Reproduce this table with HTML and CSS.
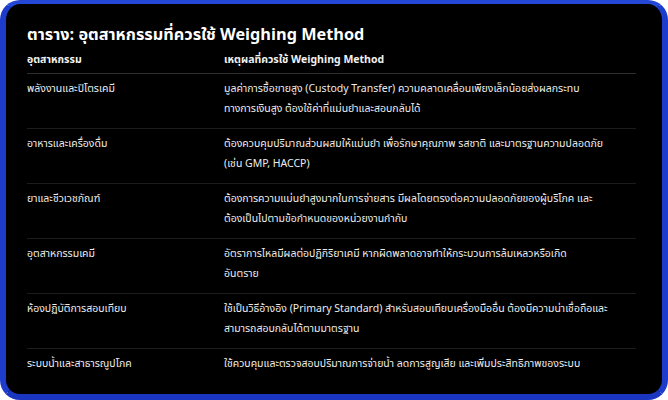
FILE: index.html
```html
<!DOCTYPE html>
<html lang="th">
<head>
<meta charset="utf-8">
<title>ตาราง: อุตสาหกรรมที่ควรใช้ Weighing Method</title>
<link rel="stylesheet" href="styles.css">
</head>
<body>
<div class="frame">
  <h2 class="title">ตาราง: อุตสาหกรรมที่ควรใช้ Weighing Method</h2>
  <table class="tbl">
    <colgroup><col class="c1"><col class="c2"></colgroup>
    <thead>
      <tr><th>อุตสาหกรรม</th><th>เหตุผลที่ควรใช้ Weighing Method</th></tr>
    </thead>
    <tbody>
      <tr><td>พลังงานและปิโตรเคมี</td><td>มูลค่าการซื้อขายสูง (Custody Transfer) ความคลาดเคลื่อนเพียงเล็กน้อยส่งผลกระทบ<br>ทางการเงินสูง ต้องใช้ค่าที่แม่นยำและสอบกลับได้</td></tr>
      <tr><td>อาหารและเครื่องดื่ม</td><td>ต้องควบคุมปริมาณส่วนผสมให้แม่นยำ เพื่อรักษาคุณภาพ รสชาติ และมาตรฐานความปลอดภัย<br>(เช่น GMP, HACCP)</td></tr>
      <tr><td>ยาและชีวเวชภัณฑ์</td><td>ต้องการความแม่นยำสูงมากในการจ่ายสาร มีผลโดยตรงต่อความปลอดภัยของผู้บริโภค และ<br>ต้องเป็นไปตามข้อกำหนดของหน่วยงานกำกับ</td></tr>
      <tr><td>อุตสาหกรรมเคมี</td><td>อัตราการไหลมีผลต่อปฏิกิริยาเคมี หากผิดพลาดอาจทำให้กระบวนการล้มเหลวหรือเกิด<br>อันตราย</td></tr>
      <tr><td>ห้องปฏิบัติการสอบเทียบ</td><td>ใช้เป็นวิธีอ้างอิง (Primary Standard) สำหรับสอบเทียบเครื่องมืออื่น ต้องมีความน่าเชื่อถือและ<br>สามารถสอบกลับได้ตามมาตรฐาน</td></tr>
      <tr><td>ระบบน้ำและสาธารณูปโภค</td><td>ใช้ควบคุมและตรวจสอบปริมาณการจ่ายน้ำ ลดการสูญเสีย และเพิ่มประสิทธิภาพของระบบ</td></tr>
    </tbody>
  </table>
</div>
</body>
</html>
```
FILE: styles.css
```css
html, body {
  margin: 0;
  padding: 0;
  background: #ffffff;
}
.frame {
  box-sizing: border-box;
  width: 668px;
  height: 400px;
  background: #000000;
  border: 6px solid #1e3ccc;
  border-top-width: 4px;
  border-top-color: #2447d6;
  border-bottom-color: #1a36c0;
  border-radius: 20px;
  padding: 18px 24px 0 21px;
  font-family: "Noto Sans Thai", "Noto Sans", "Leelawadee UI", sans-serif;
  color: #ededed;
  overflow: hidden;
}
.title {
  margin: 0;
  font-size: 16.3px;
  line-height: 26px;
  font-weight: 700;
  color: #ffffff;
}
.tbl {
  width: 609px;
  border-collapse: collapse;
  table-layout: fixed;
  font-size: 10.5px;
  line-height: 19.5px;
}
.c1 { width: 197px; }
.tbl th {
  text-align: left;
  font-weight: 700;
  padding: 2px 0 3px;
  line-height: 20px;
  color: #f2f2f2;
  border-bottom: 1px solid #2e2e2e;
}
.tbl td {
  text-align: left;
  vertical-align: top;
  padding: 6px 0 9px;
  border-bottom: 1px solid #1c1c1c;
  white-space: nowrap;
}
.tbl tbody tr:last-child td {
  border-bottom: none;
}
```
